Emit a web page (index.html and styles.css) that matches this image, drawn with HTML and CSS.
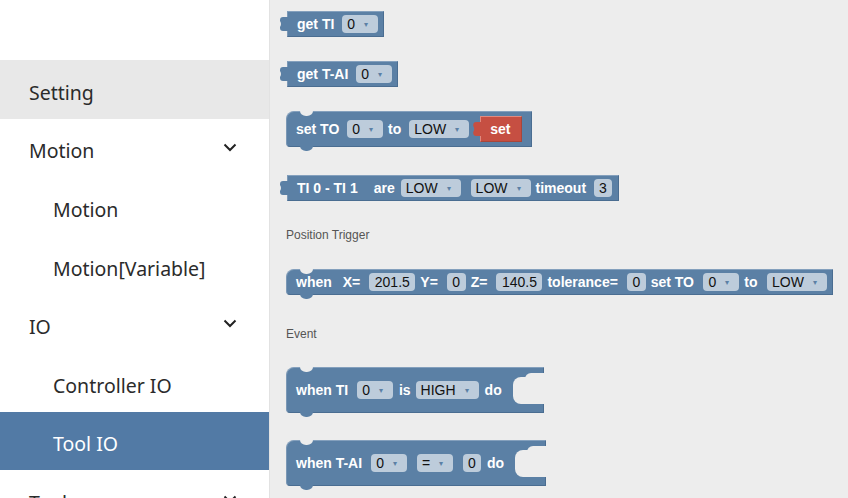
FILE: index.html
```html
<!DOCTYPE html>
<html>
<head>
<meta charset="utf-8">
<link rel="stylesheet" href="styles.css">
</head>
<body>
<div class="app">
  <nav class="nav">
    <div class="item hl">Setting</div>
    <div class="item">Motion<svg class="chev" width="14" height="9" viewBox="0 0 14 9"><path d="M1.5 1.5 L7 7 L12.5 1.5" fill="none" stroke="#222" stroke-width="2"/></svg></div>
    <div class="item sub">Motion</div>
    <div class="item sub">Motion[Variable]</div>
    <div class="item">IO<svg class="chev" width="14" height="9" viewBox="0 0 14 9"><path d="M1.5 1.5 L7 7 L12.5 1.5" fill="none" stroke="#222" stroke-width="2"/></svg></div>
    <div class="item sub">Controller IO</div>
    <div class="item sub sel">Tool IO</div>
    <div class="item">Tools<svg class="chev" width="14" height="9" viewBox="0 0 14 9"><path d="M1.5 1.5 L7 7 L12.5 1.5" fill="none" stroke="#222" stroke-width="2"/></svg></div>
  </nav>
  <main class="ws">
    <div class="blk out b1"><span class="t">get TI</span><span class="f dd">0<i>▾</i></span></div>
    <div class="blk out b2"><span class="t">get T-AI</span><span class="f dd">0<i>▾</i></span></div>
    <div class="blk stmt b3"><span class="t">set TO</span><span class="f dd">0<i>▾</i></span><span class="t">to</span><span class="f dd">LOW<i>▾</i></span><span class="blk out red"><span class="t">set</span></span></div>
    <div class="blk out b4"><span class="t">TI 0 - TI 1</span><span class="t are">are</span><span class="f dd first">LOW<i>▾</i></span><span class="f dd">LOW<i>▾</i></span><span class="t">timeout</span><span class="f">3</span></div>
    <div class="cat c1">Position Trigger</div>
    <div class="blk stmt b6"><span class="t">when</span><span class="t">X=</span><span class="f">201.5</span><span class="t">Y=</span><span class="f">0</span><span class="t">Z=</span><span class="f">140.5</span><span class="t">tolerance=</span><span class="f">0</span><span class="t">set TO</span><span class="f dd">0<i>▾</i></span><span class="t">to</span><span class="f dd">LOW<i>▾</i></span></div>
    <div class="cat c2">Event</div>
    <div class="blk stmt ev b8"><span class="t">when TI</span><span class="f dd">0<i>▾</i></span><span class="t is">is</span><span class="f dd">HIGH<i>▾</i></span><span class="t">do</span><span class="mouth"></span></div>
    <div class="blk stmt ev b9"><span class="t">when T-AI</span><span class="f dd">0<i>▾</i></span><span class="f dd">=<i>▾</i></span><span class="f">0</span><span class="t">do</span><span class="mouth"></span></div>
  </main>
</div>
</body>
</html>
```
FILE: styles.css
```css
* { box-sizing: border-box; }
html, body { margin: 0; padding: 0; }
body { width: 848px; height: 498px; overflow: hidden; background: #ededed; }
.app { display: flex; height: 498px; }

.nav {
  width: 270px;
  flex: none;
  background: #fff;
  border-right: 1px solid #e2e2e2;
  padding-top: 60px;
  overflow: hidden;
  font-family: "Noto Sans", "Open Sans", sans-serif;
}
.item {
  height: 58.6px;
  display: flex;
  align-items: center;
  padding: 6px 32px 0 29px;
  font-size: 19.5px;
  color: #2b2b2b;
}
.item.sub { padding-left: 53px; }
.item.hl { background: #e8e8e8; }
.item.sel { background: #527aa5; color: #fff; }
.chev { margin-left: auto; margin-top: -6px; }

.ws {
  flex: 1;
  display: flex;
  flex-direction: column;
  align-items: flex-start;
  padding: 11px 0 0 16px;
  font-family: "Liberation Sans", Arial, sans-serif;
}

.blk {
  position: relative;
  display: inline-flex;
  align-items: center;
  gap: 5px;
  height: 26px;
  padding: 0 5px 0 9px;
  background: #5b80a5;
  border: 1px solid #4a6d91;
  border-top-color: #84a0bd;
  border-left-color: #7b98b6;
  color: #fff;
  font-weight: bold;
  font-size: 14px;
  flex: none;
}
.blk.out { margin-left: 1px; }
.blk.out::before {
  content: "";
  position: absolute;
  left: -9px;
  top: 5px;
  width: 9px;
  height: 14px;
  background: #5b80a5;
  clip-path: path("M9,0 L4,0 Q1,0 1,3 L1,4 Q3,7 1,10 L1,11 Q1,14 4,14 L9,14 Z");
}
.blk.stmt { border-radius: 8px 0 0 4px; }
.blk.stmt::before {
  content: "";
  position: absolute;
  top: -1px;
  left: 13px;
  width: 13px;
  height: 5px;
  background: #ededed;
  border-radius: 0 0 6px 6px / 0 0 5px 5px;
}
.blk.stmt::after {
  content: "";
  position: absolute;
  bottom: -5px;
  left: 13px;
  width: 13px;
  height: 5px;
  background: #5b80a5;
  border-radius: 0 0 6px 6px / 0 0 5px 5px;
}

.t { white-space: pre; }
.t + .f { margin-left: 3px; }
.f + .f { margin-left: 5px; }
.t + .t { margin-left: 6px; }
.b6 .t + .f, .ev .t + .f { margin-left: 4px; }
.ev .t.is + .f { margin-left: 0; }

.f {
  display: inline-flex;
  align-items: center;
  height: 18px;
  padding: 0 5px;
  background: #bdccdb;
  border-radius: 4px;
  color: #111;
  font-weight: normal;
  font-size: 14px;
}
.f.dd { padding-right: 9px; }
.f i {
  font-style: normal;
  font-size: 8px;
  color: #5b80a5;
  margin-left: 9px;
  width: 5px;
  overflow: visible;
}

.b2 { margin-top: 24px; }
.b3 { margin-top: 24px; height: 36px; padding-right: 9px; }
.b4 { margin-top: 28px; padding-right: 6px; }
.b4 .are { margin-left: 11px; }
.b4 .f.first { margin-left: 1px; }
.b6 { margin-top: 0; padding-right: 5px; }
.b6 .f { padding: 0 5.5px; }
.b6 .f.dd { padding-right: 9px; }

.blk.red {
  height: 26px;
  width: 42px;
  padding: 0 0 0 9px;
  margin-left: 6px;
  background: #c64f42;
  border-color: #e08a80;
  border-bottom-color: #a8463b;
  border-right-color: #a8463b;
}
.blk.red::before { background: #c64f42; }

.cat {
  font-size: 12px;
  color: #555;
  line-height: 16px;
  font-weight: normal;
}
.c1 { margin-top: 26px; margin-bottom: 26px; }
.c2 { margin-top: 31px; }

.ev { height: 46px; padding-right: 0; }
.b8 { margin-top: 25px; }
.b9 { margin-top: 27px; }
.ev .f + .t { margin-left: 1px; }
.mouth {
  position: relative;
  align-self: stretch;
  margin: 9px -1px 8px 6px;
  width: 31px;
  background: #ededed;
  border-radius: 8px 0 0 8px;
}
.mouth::after {
  content: "";
  position: absolute;
  top: -4px;
  left: 12px;
  width: 19px;
  height: 6px;
  background: #ededed;
  border-radius: 6px 0 0 0;
}
```
